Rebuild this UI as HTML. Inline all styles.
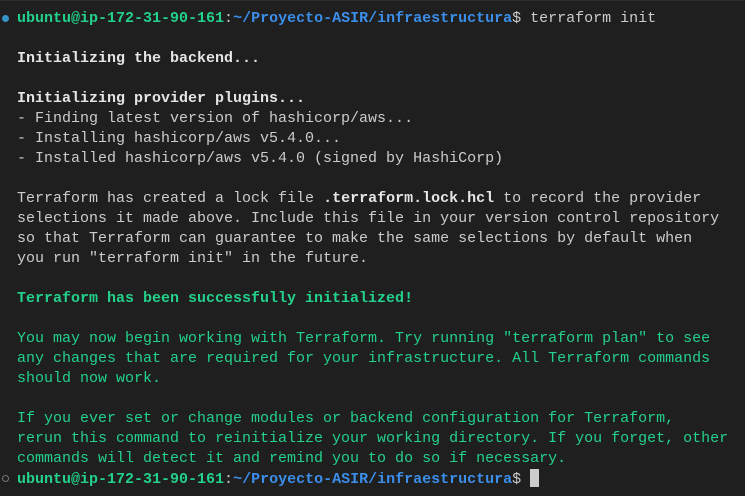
<!DOCTYPE html>
<html><head><style>
html,body{margin:0;padding:0;background:#1f1f1f;width:745px;height:496px;overflow:hidden}
body{border-top:1px solid #2b2b2b;box-sizing:border-box}
pre{margin:0;position:absolute;left:17px;top:9px;font-family:"Liberation Mono",monospace;font-size:15px;line-height:20px;color:#cccccc}
.g{color:#23d18b;font-weight:bold}
.gn{color:#23d18b}
.b{color:#3b8eea;font-weight:bold}
.w{font-weight:bold;color:#e5e5e5}
.dot{position:absolute;left:2px;width:7px;height:7px;border-radius:50%}
.cur{display:inline-block;width:9px;height:18px;background:#cccccc;vertical-align:-4px}
</style></head><body>
<div class="dot" style="top:15px;background:#3794c8"></div>
<div class="dot" style="top:475px;border:1.5px solid #777;width:5px;height:5px"></div>
<pre><span class="g">ubuntu@ip-172-31-90-161</span>:<span class="b">~/Proyecto-ASIR/infraestructura</span>$ terraform init

<span class="w">Initializing the backend...</span>

<span class="w">Initializing provider plugins...</span>
- Finding latest version of hashicorp/aws...
- Installing hashicorp/aws v5.4.0...
- Installed hashicorp/aws v5.4.0 (signed by HashiCorp)

Terraform has created a lock file <span class="w">.terraform.lock.hcl</span> to record the provider
selections it made above. Include this file in your version control repository
so that Terraform can guarantee to make the same selections by default when
you run "terraform init" in the future.

<span class="g">Terraform has been successfully initialized!</span>

<span class="gn">You may now begin working with Terraform. Try running "terraform plan" to see
any changes that are required for your infrastructure. All Terraform commands
should now work.

If you ever set or change modules or backend configuration for Terraform,
rerun this command to reinitialize your working directory. If you forget, other
commands will detect it and remind you to do so if necessary.</span>
<span class="g">ubuntu@ip-172-31-90-161</span>:<span class="b">~/Proyecto-ASIR/infraestructura</span>$ <span class="cur"></span></pre>
</body></html>
